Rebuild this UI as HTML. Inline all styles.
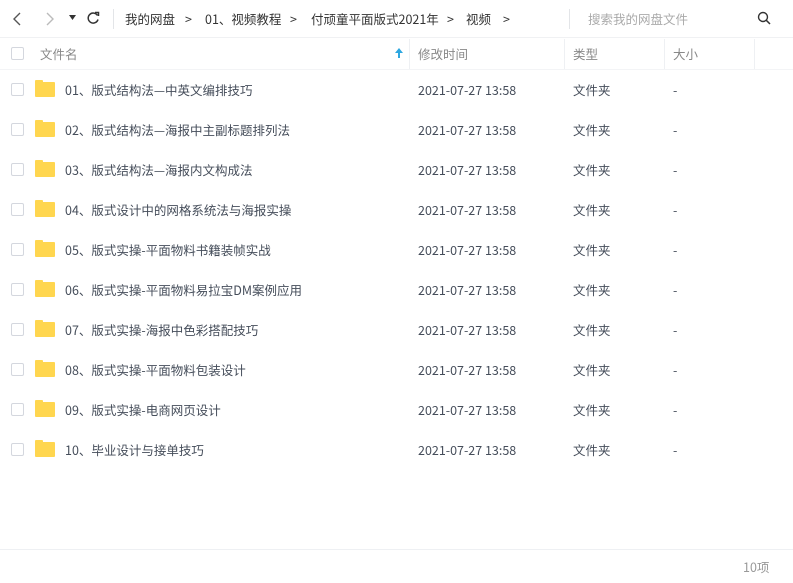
<!DOCTYPE html>
<html><head><meta charset="utf-8"><style>
*{margin:0;padding:0;box-sizing:border-box}
body{width:793px;height:583px;background:#fff;font-family:"Noto Sans CJK SC","Liberation Sans",sans-serif;font-size:12.5px;color:#424e67;position:relative;overflow:hidden}
.a{position:absolute;white-space:nowrap;line-height:16px}
.cb{position:absolute;left:11px;width:13px;height:13px;border:1px solid #d4d7de;border-radius:2px;background:#fff}
.fold{position:absolute;left:35px;width:20px;height:15px;background:#ffd64f;border-radius:1px}
.fold:before{content:"";position:absolute;left:0;top:-2px;width:8px;height:3px;background:#ffd64f;border-radius:1px 1px 0 0}
.t{color:#454d5a}
.g{color:#888}
.sep{position:absolute;top:39px;width:1px;height:30px;background:#eef0f3}
</style></head><body>
<svg class="a" style="left:12px;top:12px" width="12" height="14"><path d="M8 1 L2 7 L8 13" fill="none" stroke="#555" stroke-width="1.4"/></svg>
<svg class="a" style="left:44px;top:12px" width="12" height="14"><path d="M3 1 L9 7 L3 13" fill="none" stroke="#bbb" stroke-width="1.4"/></svg>
<svg class="a" style="left:69px;top:15px" width="8" height="6"><path d="M0 0 L7 0 L3.5 5Z" fill="#333"/></svg>
<svg class="a" style="left:86px;top:11px" width="14" height="14"><path d="M11.5 4.5 A5 5 0 1 0 12 8.5" fill="none" stroke="#333" stroke-width="1.5"/><path d="M9 1.5 L12.5 1.5 L12.5 5" fill="none" stroke="#333" stroke-width="1.5"/></svg>
<div class="a" style="left:113px;top:9px;width:1px;height:20px;background:#e3e5e8"></div>
<div class="a" style="left:125px;top:11px;color:#333">我的网盘</div>
<div class="a" style="left:185px;top:11px;color:#333">&gt;</div>
<div class="a" style="left:205px;top:11px;color:#333">01、视频教程</div>
<div class="a" style="left:290px;top:11px;color:#333">&gt;</div>
<div class="a" style="left:311px;top:11px;color:#333">付顽童平面版式2021年</div>
<div class="a" style="left:447px;top:11px;color:#333">&gt;</div>
<div class="a" style="left:466px;top:11px;color:#333">视频</div>
<div class="a" style="left:503px;top:11px;color:#333">&gt;</div>
<div class="a" style="left:569px;top:9px;width:1px;height:20px;background:#e3e5e8"></div>
<div class="a" style="left:588px;top:11px;color:#aaa">搜索我的网盘文件</div>
<svg class="a" style="left:757px;top:11px" width="14" height="14"><circle cx="6" cy="6" r="4.5" fill="none" stroke="#333" stroke-width="1.4"/><path d="M9.3 9.3 L13 13" stroke="#333" stroke-width="1.5"/></svg>
<div class="a" style="left:0;top:37px;width:793px;height:1px;background:#f0f1f3"></div>
<div class="cb" style="top:47px"></div>
<div class="a g" style="left:40px;top:46px">文件名</div>
<svg class="a" style="left:395px;top:48px" width="8" height="10"><path d="M4 0 L8 5 L5 5 L5 10 L3 10 L3 5 L0 5Z" fill="#2ea7e0"/></svg>
<div class="sep" style="left:409px"></div>
<div class="a g" style="left:418px;top:46px">修改时间</div>
<div class="sep" style="left:564px"></div>
<div class="a g" style="left:573px;top:46px">类型</div>
<div class="sep" style="left:664px"></div>
<div class="a g" style="left:673px;top:46px">大小</div>
<div class="sep" style="left:754px"></div>
<div class="a" style="left:0;top:69px;width:793px;height:1px;background:#f3f4f6"></div>
<div class="cb" style="top:83px"></div><div class="fold" style="top:82px"></div><div class="a t" style="left:65px;top:82px">01、版式结构法—中英文编排技巧</div><div class="a t" style="left:418px;top:82px">2021-07-27 13:58</div><div class="a t" style="left:573px;top:82px">文件夹</div><div class="a t" style="left:673px;top:82px">-</div>
<div class="cb" style="top:123px"></div><div class="fold" style="top:122px"></div><div class="a t" style="left:65px;top:122px">02、版式结构法—海报中主副标题排列法</div><div class="a t" style="left:418px;top:122px">2021-07-27 13:58</div><div class="a t" style="left:573px;top:122px">文件夹</div><div class="a t" style="left:673px;top:122px">-</div>
<div class="cb" style="top:163px"></div><div class="fold" style="top:162px"></div><div class="a t" style="left:65px;top:162px">03、版式结构法—海报内文构成法</div><div class="a t" style="left:418px;top:162px">2021-07-27 13:58</div><div class="a t" style="left:573px;top:162px">文件夹</div><div class="a t" style="left:673px;top:162px">-</div>
<div class="cb" style="top:203px"></div><div class="fold" style="top:202px"></div><div class="a t" style="left:65px;top:202px">04、版式设计中的网格系统法与海报实操</div><div class="a t" style="left:418px;top:202px">2021-07-27 13:58</div><div class="a t" style="left:573px;top:202px">文件夹</div><div class="a t" style="left:673px;top:202px">-</div>
<div class="cb" style="top:243px"></div><div class="fold" style="top:242px"></div><div class="a t" style="left:65px;top:242px">05、版式实操-平面物料书籍装帧实战</div><div class="a t" style="left:418px;top:242px">2021-07-27 13:58</div><div class="a t" style="left:573px;top:242px">文件夹</div><div class="a t" style="left:673px;top:242px">-</div>
<div class="cb" style="top:283px"></div><div class="fold" style="top:282px"></div><div class="a t" style="left:65px;top:282px">06、版式实操-平面物料易拉宝DM案例应用</div><div class="a t" style="left:418px;top:282px">2021-07-27 13:58</div><div class="a t" style="left:573px;top:282px">文件夹</div><div class="a t" style="left:673px;top:282px">-</div>
<div class="cb" style="top:323px"></div><div class="fold" style="top:322px"></div><div class="a t" style="left:65px;top:322px">07、版式实操-海报中色彩搭配技巧</div><div class="a t" style="left:418px;top:322px">2021-07-27 13:58</div><div class="a t" style="left:573px;top:322px">文件夹</div><div class="a t" style="left:673px;top:322px">-</div>
<div class="cb" style="top:363px"></div><div class="fold" style="top:362px"></div><div class="a t" style="left:65px;top:362px">08、版式实操-平面物料包装设计</div><div class="a t" style="left:418px;top:362px">2021-07-27 13:58</div><div class="a t" style="left:573px;top:362px">文件夹</div><div class="a t" style="left:673px;top:362px">-</div>
<div class="cb" style="top:403px"></div><div class="fold" style="top:402px"></div><div class="a t" style="left:65px;top:402px">09、版式实操-电商网页设计</div><div class="a t" style="left:418px;top:402px">2021-07-27 13:58</div><div class="a t" style="left:573px;top:402px">文件夹</div><div class="a t" style="left:673px;top:402px">-</div>
<div class="cb" style="top:443px"></div><div class="fold" style="top:442px"></div><div class="a t" style="left:65px;top:442px">10、毕业设计与接单技巧</div><div class="a t" style="left:418px;top:442px">2021-07-27 13:58</div><div class="a t" style="left:573px;top:442px">文件夹</div><div class="a t" style="left:673px;top:442px">-</div>
<div class="a" style="left:0;top:549px;width:793px;height:1px;background:#eef0f3"></div>
<div class="a" style="left:743px;top:559px;color:#999">10项</div>
</body></html>
